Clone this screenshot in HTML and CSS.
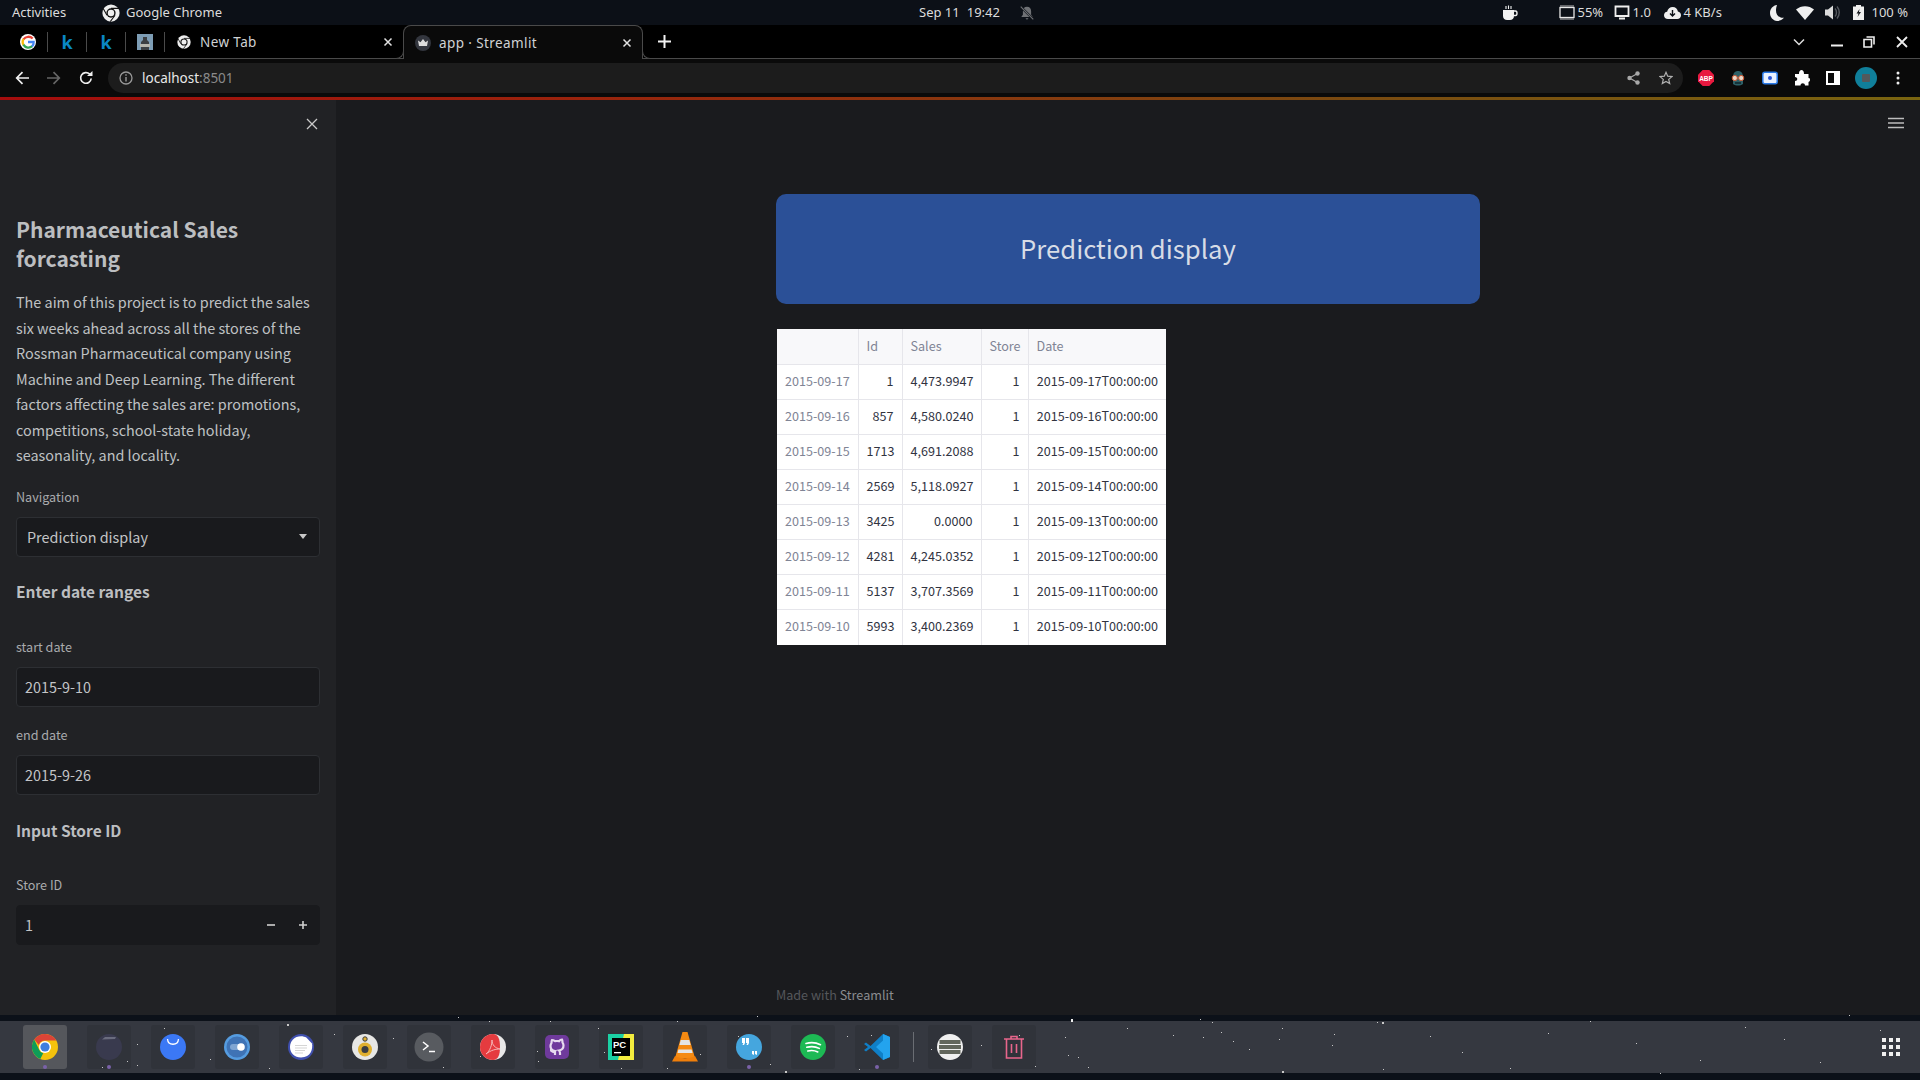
FILE: index.html
```html
<!DOCTYPE html>
<html lang="en">
<head>
<meta charset="utf-8">
<title>app · Streamlit</title>
<link rel="stylesheet" href="styles.css">
</head>
<body>
<svg class="defs" width="0" height="0" aria-hidden="true">
  <symbol id="chrome-mono" viewBox="0 0 24 24">
    <circle cx="12" cy="12" r="11.5" fill="#eee"/>
    <circle cx="12" cy="12" r="6.2" fill="#111"/>
    <circle cx="12" cy="12" r="4.3" fill="#eee"/>
    <path d="M12 5.8H23M6.6 15 1.6 6M17.4 15 11 23.5" stroke="#111" stroke-width="1.4" fill="none"/>
  </symbol>
</svg>

<header class="statusbar">
  <div class="status-left">
    <span class="st-activities">Activities</span>
    <svg class="st-chrome" width="18" height="18"><use href="#chrome-mono"/></svg>
    <span>Google Chrome</span>
  </div>
  <div class="status-center">
    <span>Sep 11</span><span class="st-time">19:42</span>
    <svg class="st-bell" width="16" height="16" viewBox="0 0 14 14"><path d="M7 1.5c-2.4 0-3.6 1.800-3.600 4v3L2 10.500h10l-1.400-2v-3c0-2.200-1.200-4-3.600-4ZM5.600 11.500h2.800L7 13Z" fill="#6f7175"/><path d="M1.500 1.500 12.500 12.500" stroke="#0c1017" stroke-width="2"/><path d="M1.500 1.500 12.500 12.500" stroke="#6f7175" stroke-width="1"/></svg>
  </div>
  <div class="status-right">
    <svg class="st-coffee" width="16" height="16" viewBox="0 0 16 16"><path d="M1 5h11v6c0 2.500-1.800 4-4 4H5c-2.200 0-4-1.500-4-4Z" fill="#f2f2f2"/><path d="M12 6h1.500c2 0 2 4.500 0 4.500H12" fill="none" stroke="#f2f2f2" stroke-width="1.400"/><path d="M4 1v3M6.500 .5v3.500M9 1v3" stroke="#f2f2f2" stroke-width="1.100"/></svg>
    <svg class="st-chip" width="16" height="15" viewBox="0 0 16 15"><rect x="1" y="2.500" width="14" height="10" fill="none" stroke="#e8e8e8" stroke-width="1.300"/><path d="M2 0v2M4 0v2M6 0v2M8 0v2M10 0v2M12 0v2M14 0v2M2 13v2M4 13v2M6 13v2M8 13v2M10 13v2M12 13v2M14 13v2" stroke="#e8e8e8" stroke-width=".8"/></svg>
    <span class="st-cpu">55%</span>
    <svg class="st-mon" width="16" height="15" viewBox="0 0 16 15"><path d="M1.500 1.500h13v9.500h-13Z" fill="none" stroke="#efefef" stroke-width="1.800"/><path d="M5 13.500h6" stroke="#efefef" stroke-width="2"/></svg>
    <span class="st-load">1.0</span>
    <svg class="st-cloud" width="17" height="12" viewBox="0 0 17 12"><path d="M4 12C1.500 12 0 10.500 0 8.300 0 6.400 1.300 5 3.100 4.800 3.800 2 6 0 8.700 0c2.700 0 4.900 1.800 5.200 4.500 1.800.3 3.100 1.800 3.100 3.700 0 2.200-1.600 3.800-3.700 3.800Z" fill="#efefef"/><path d="M8.500 3v5.500M6 6.500l2.500 2.500L11 6.500" fill="none" stroke="#0c1017" stroke-width="1.400"/></svg>
    <span class="st-net">4 KB/s</span>
    <svg class="st-moon" width="14" height="16" viewBox="0 0 14 16"><path d="M7 0C3 .5 0 3.800 0 8s3 7.500 7 8c2.500 0 5-1 7-3.200C8 13.500 4 8 7 0Z" fill="#efefef"/></svg>
    <svg class="st-wifi" width="18" height="14" viewBox="0 0 18 14"><path d="M0 3.500C5-1 13-1 18 3.500L9 14Z" fill="#efefef"/></svg>
    <svg class="st-vol" width="16" height="15" viewBox="0 0 16 15"><path d="M0 4.500h3L8 .5v14L3 10.500H0Z" fill="#dcdcdc"/><path d="M10 3.500c2 2 2 6 0 8M12 1.500c3 3.500 3 8.500 0 12" fill="none" stroke="#55585e" stroke-width="1.400"/></svg>
    <svg class="st-batt" width="11" height="15" viewBox="0 0 11 15"><path d="M3 0h5v1.500h3V15H0V1.500h3Z" fill="#efefef"/><path d="M6.500 4 3.500 8.500h2L4.500 12l3.500-5H6Z" fill="#15181d"/></svg>
    <span class="st-pct">100 %</span>
  </div>
</header>

<nav class="tabstrip">
  <div class="pin">
    <svg width="16" height="16" viewBox="0 0 24 24"><circle cx="12" cy="12" r="12" fill="#fff"/><path d="M19 6.800A9 9 0 0 0 5.200 8" fill="none" stroke="#ea4335" stroke-width="3.400"/><path d="M5.200 7.500a9 9 0 0 0 0 9" fill="none" stroke="#fbbc05" stroke-width="3.400"/><path d="M5 16a9 9 0 0 0 13.500 2.300" fill="none" stroke="#34a853" stroke-width="3.400"/><path d="M12 12h8.500c.2 2.500-.8 5-2.500 6.500" fill="none" stroke="#4285f4" stroke-width="3.400"/></svg>
  </div>
  <div class="pin pin-k">k</div>
  <div class="pin pin-k">k</div>
  <div class="pin">
    <svg width="16" height="16" viewBox="0 0 16 16"><rect width="16" height="16" fill="#7d9db5"/><path d="M6 3h4v3l2 2v8H4V8l2-2Z" fill="#3c3f42"/><rect x="3" y="10" width="10" height="3" fill="#b5b5ad"/></svg>
  </div>
  <div class="tab">
    <svg class="tab-ic" width="14" height="14"><use href="#chrome-mono"/></svg>
    <span class="tab-title">New Tab</span>
    <svg class="tab-x" width="10" height="10" viewBox="0 0 10 10"><path d="M1.500 1.500l7 7M8.500 1.500l-7 7" stroke="#e2e2e2" stroke-width="1.500"/></svg>
  </div>
  <div class="tab tab-active">
    <svg class="tab-ic" width="16" height="16" viewBox="0 0 16 16"><circle cx="8" cy="8" r="8" fill="#33363e"/><path d="M3 5.500l2.500 1.800L8 4l2.500 3.300L13 5.500l-1 5.500H4Z" fill="#ddd"/></svg>
    <span class="tab-title">app · Streamlit</span>
    <svg class="tab-x" width="10" height="10" viewBox="0 0 10 10"><path d="M1.500 1.500l7 7M8.500 1.500l-7 7" stroke="#e2e2e2" stroke-width="1.500"/></svg>
  </div>
  <svg class="tab-plus" width="13" height="13" viewBox="0 0 13 13"><path d="M6.500 0v13M0 6.500h13" stroke="#f2f2f2" stroke-width="2"/></svg>
  <svg class="win-chev" width="12" height="8" viewBox="0 0 12 8"><path d="M1 1.500l5 5 5-5" fill="none" stroke="#ddd" stroke-width="1.500"/></svg>
  <svg class="win-min" width="12" height="10" viewBox="0 0 12 10"><path d="M0 8.500h12" stroke="#eee" stroke-width="2"/></svg>
  <svg class="win-max" width="12" height="12" viewBox="0 0 12 12"><path d="M3.500 1h7.500v7.500M1 3.500h7.500v7.500H1Z" fill="none" stroke="#eee" stroke-width="1.600"/></svg>
  <svg class="win-close" width="12" height="12" viewBox="0 0 12 12"><path d="M1 1l10 10M11 1 1 11" stroke="#eee" stroke-width="1.800"/></svg>
</nav>

<div class="toolbar">
  <svg class="tb-back" width="14" height="14" viewBox="0 0 14 14"><path d="M14 7H2M7.500 1.200 1.700 7l5.800 5.800" fill="none" stroke="#f0f0f0" stroke-width="1.700"/></svg>
  <svg class="tb-fwd" width="14" height="14" viewBox="0 0 14 14"><path d="M0 7h12M6.500 1.200 12.300 7l-5.800 5.800" fill="none" stroke="#666" stroke-width="1.700"/></svg>
  <svg class="tb-reload" width="14" height="14" viewBox="0 0 14 14"><path d="M12.200 7.500A5.300 5.300 0 1 1 10.700 3.200" fill="none" stroke="#f0f0f0" stroke-width="1.700"/><path d="M8 5h5.500V0Z" fill="#f0f0f0"/></svg>
  <div class="omnibox">
    <svg class="omni-info" width="14" height="14" viewBox="0 0 14 14"><circle cx="7" cy="7" r="6" fill="none" stroke="#9a9a9a" stroke-width="1.300"/><path d="M7 6v4.500M7 3.300v1.500" stroke="#9a9a9a" stroke-width="1.400"/></svg>
    <span class="omni-host">localhost</span><span class="omni-port">:8501</span>
    <svg class="omni-share" width="13" height="14" viewBox="0 0 13 14"><path d="M10.500 2.500 2.500 7l8 4.500" fill="none" stroke="#a8a8a8" stroke-width="1.200"/><circle cx="10.500" cy="2.500" r="2.200" fill="#a8a8a8"/><circle cx="2.500" cy="7" r="2.200" fill="#a8a8a8"/><circle cx="10.500" cy="11.500" r="2.200" fill="#a8a8a8"/></svg>
    <svg width="14" height="14" viewBox="0 0 14 14"><path d="M7 1.300 8.700 5.200l4.300.4-3.300 2.800 1 4.200L7 10.400 3.300 12.600l1-4.200L1 5.600l4.300-.4Z" fill="none" stroke="#b0b0b0" stroke-width="1.200"/></svg>
  </div>
  <svg class="ext ext-first" width="16" height="16" viewBox="0 0 16 16"><path d="M4.700 0h6.600L16 4.700v6.600L11.300 16H4.700L0 11.300V4.700Z" fill="#e8193f"/><text class="abp" x="8" y="10.500" text-anchor="middle">ABP</text></svg>
  <svg class="ext" width="16" height="16" viewBox="0 0 16 16"><path d="M3 7C3 3 5 1 8 1s5 2 5 6v7c-3 2-7 2-10 0Z" fill="#2d5f66"/><circle cx="4.800" cy="8" r="2.600" fill="#e9d7c8" stroke="#d0562f"/><circle cx="11.200" cy="8" r="2.600" fill="#e9d7c8" stroke="#d0562f"/><rect x="5" y="12" width="6" height="2" fill="#16333a"/></svg>
  <svg class="ext" width="16" height="14" viewBox="0 0 16 14"><rect x=".8" y="1.300" width="14.400" height="11.400" rx="2" fill="#e9f1ff" stroke="#2878e6" stroke-width="1.500"/><circle cx="8" cy="7" r="2" fill="#2b56d8"/></svg>
  <svg class="ext" width="16" height="16" viewBox="0 0 16 16"><path d="M1 4h4C5 1 6.200 0 7.500 0S10 1 10 4h4.500v4c3 0 1.500 4 0 4v3.500H11c0-3-4.500-3-4.500 0H1V11c3 0 3-4 0-4Z" fill="#fff"/></svg>
  <svg class="ext" width="14" height="14" viewBox="0 0 14 14"><rect width="14" height="14" fill="#fff"/><rect x="2" y="2" width="6" height="10" fill="#0a0a0a"/></svg>
  <svg class="ext ext-avatar" width="22" height="22" viewBox="0 0 22 22"><circle cx="11" cy="11" r="11" fill="#107f9a"/><rect x="7" y="7" width="8" height="8" rx="1" fill="#53595c"/></svg>
  <svg class="ext ext-dots" width="4" height="14" viewBox="0 0 4 14"><circle cx="2" cy="2" r="1.500" fill="#eee"/><circle cx="2" cy="7" r="1.500" fill="#eee"/><circle cx="2" cy="12" r="1.500" fill="#eee"/></svg>
</div>
<div class="loadline"></div>

<div class="app">
  <aside class="sidebar">
    <svg class="side-close" width="12" height="12" viewBox="0 0 12 12"><path d="M1 1l10 10M11 1 1 11" stroke="#c9c9c9" stroke-width="1.300"/></svg>
    <h2 class="side-title">Pharmaceutical Sales forcasting</h2>
    <p class="side-text">The aim of this project is to predict the sales six weeks ahead across all the stores of the Rossman Pharmaceutical company using Machine and Deep Learning. The different factors affecting the sales are: promotions, competitions, school-state holiday, seasonality, and locality.</p>
    <label class="field-label label-nav">Navigation</label>
    <div class="field field-select">
      <span>Prediction display</span>
      <span class="caret"></span>
    </div>
    <h3 class="side-h3 h3-date">Enter date ranges</h3>
    <label class="field-label label-start">start date</label>
    <div class="field">2015-9-10</div>
    <label class="field-label label-end">end date</label>
    <div class="field">2015-9-26</div>
    <h3 class="side-h3 h3-store">Input Store ID</h3>
    <label class="field-label label-store">Store ID</label>
    <div class="field field-num">
      <span>1</span>
      <svg class="num-minus" width="10" height="10" viewBox="0 0 10 10"><path d="M1 5h8" stroke="#d0d0d0" stroke-width="1.600"/></svg>
      <svg class="num-plus" width="10" height="10" viewBox="0 0 10 10"><path d="M1 5h8M5 1v8" stroke="#d0d0d0" stroke-width="1.600"/></svg>
    </div>
  </aside>

  <main class="main">
    <svg class="hamburger" width="16" height="12" viewBox="0 0 16 12"><path d="M0 1.500h16M0 6h16M0 10.500h16" stroke="#bdbdbd" stroke-width="1.500"/></svg>
    <div class="content">
      <div class="banner">Prediction display</div>
      <table class="frame">
        <colgroup><col class="c0"><col class="c1"><col class="c2"><col class="c3"><col class="c4"></colgroup>
        <thead>
          <tr><th></th><th>Id</th><th>Sales</th><th>Store</th><th>Date</th></tr>
        </thead>
        <tbody>
          <tr><th>2015-09-17</th><td>1</td><td>4,473.9947</td><td>1</td><td>2015-09-17T00:00:00</td></tr>
          <tr><th>2015-09-16</th><td>857</td><td>4,580.0240</td><td>1</td><td>2015-09-16T00:00:00</td></tr>
          <tr><th>2015-09-15</th><td>1713</td><td>4,691.2088</td><td>1</td><td>2015-09-15T00:00:00</td></tr>
          <tr><th>2015-09-14</th><td>2569</td><td>5,118.0927</td><td>1</td><td>2015-09-14T00:00:00</td></tr>
          <tr><th>2015-09-13</th><td>3425</td><td>0.0000</td><td>1</td><td>2015-09-13T00:00:00</td></tr>
          <tr><th>2015-09-12</th><td>4281</td><td>4,245.0352</td><td>1</td><td>2015-09-12T00:00:00</td></tr>
          <tr><th>2015-09-11</th><td>5137</td><td>3,707.3569</td><td>1</td><td>2015-09-11T00:00:00</td></tr>
          <tr><th>2015-09-10</th><td>5993</td><td>3,400.2369</td><td>1</td><td>2015-09-10T00:00:00</td></tr>
        </tbody>
      </table>
      <footer class="madewith">Made with <span class="madewith-name">Streamlit</span></footer>
    </div>
  </main>
</div>

<div class="desk">
  <svg class="stars" width="1920" height="65" viewBox="0 1015 1920 65" aria-hidden="true">
    <g fill="#c8c8c8">
      <rect x="164" y="1028" width="1" height="1"/><rect x="287" y="1024" width="2" height="2"/><rect x="334" y="1034" width="1" height="1"/><rect x="393" y="1038" width="1" height="1"/><rect x="443" y="1067" width="1" height="1"/><rect x="269" y="1068" width="1" height="1"/><rect x="137" y="1044" width="1" height="1"/><rect x="127" y="1061" width="1" height="1"/><rect x="137" y="1065" width="1" height="1"/><rect x="102" y="1067" width="1" height="1"/><rect x="210" y="1059" width="1" height="1"/><rect x="480" y="1056" width="1" height="1"/><rect x="458" y="1017" width="1" height="1"/><rect x="489" y="1021" width="1" height="1"/>
      <rect x="550" y="1021" width="1" height="1"/><rect x="598" y="1028" width="1" height="1"/><rect x="537" y="1051" width="1" height="1"/><rect x="538" y="1061" width="1" height="1"/><rect x="604" y="1052" width="1" height="1"/><rect x="621" y="1068" width="1" height="1"/><rect x="667" y="1068" width="1" height="1"/><rect x="700" y="1054" width="1" height="1"/><rect x="785" y="1071" width="2" height="2"/><rect x="757" y="1016" width="1" height="1"/><rect x="770" y="1064" width="1" height="1"/><rect x="738" y="1036" width="1" height="1"/><rect x="847" y="1036" width="1" height="1"/><rect x="871" y="1035" width="1" height="1"/><rect x="859" y="1069" width="1" height="1"/><rect x="931" y="1049" width="1" height="1"/><rect x="981" y="1045" width="1" height="1"/><rect x="1019" y="1035" width="1" height="1"/><rect x="677" y="1021" width="1" height="1"/>
      <rect x="1071" y="1019" width="2" height="3" fill="#eee"/><rect x="1200" y="1019" width="1" height="1"/><rect x="1212" y="1022" width="1" height="1"/><rect x="1221" y="1032" width="1" height="1"/><rect x="1203" y="1037" width="1" height="1"/><rect x="1282" y="1028" width="1" height="1"/><rect x="1279" y="1039" width="1" height="1"/><rect x="1249" y="1049" width="1" height="1"/><rect x="1233" y="1041" width="1" height="1"/><rect x="1334" y="1034" width="1" height="1"/><rect x="1332" y="1045" width="1" height="1"/><rect x="1382" y="1022" width="2" height="2"/><rect x="1377" y="1022" width="1" height="1"/><rect x="1282" y="1071" width="2" height="2"/><rect x="1383" y="1069" width="1" height="1"/><rect x="1088" y="1067" width="1" height="1"/><rect x="1078" y="1057" width="1" height="1"/><rect x="1068" y="1055" width="1" height="1"/><rect x="1065" y="1037" width="1" height="1"/><rect x="1035" y="1066" width="1" height="1"/><rect x="1127" y="1028" width="1" height="1"/><rect x="1173" y="1035" width="1" height="1"/>
      <rect x="1548" y="1033" width="1" height="1"/><rect x="1636" y="1043" width="1" height="1"/><rect x="1784" y="1039" width="1" height="1"/><rect x="1849" y="1015" width="1" height="1"/><rect x="1462" y="1052" width="1" height="1"/><rect x="1510" y="1068" width="1" height="1"/><rect x="1590" y="1021" width="1" height="1"/><rect x="1700" y="1060" width="1" height="1"/><rect x="1745" y="1027" width="1" height="1"/><rect x="1820" y="1062" width="1" height="1"/><rect x="1430" y="1036" width="1" height="1"/><rect x="1660" y="1073" width="1" height="1"/><rect x="1880" y="1030" width="1" height="1"/>
    </g>
  </svg>
  <div class="dock">
    <div class="app-slot slot-active">
      <svg width="26" height="26" viewBox="0 0 26 26"><circle cx="13" cy="13" r="13" fill="#f4c20d"/><path d="M13 0a13 13 0 0 1 11.300 6.500H13A6.500 6.500 0 0 0 6.800 11L2.200 5.600A13 13 0 0 1 13 0Z" fill="#db4437"/><path d="M2.200 5.600 7.400 16.300a6.500 6.500 0 0 0 3.800 3L8.300 25.100A13 13 0 0 1 2.200 5.600Z" fill="#0f9d58"/><circle cx="13" cy="13" r="6" fill="#fff"/><circle cx="13" cy="13" r="4.600" fill="#3f7ee0"/></svg>
      <i class="run-dot"></i>
    </div>
    <div class="app-slot">
      <svg width="26" height="26" viewBox="0 0 26 26"><circle cx="13" cy="13" r="13" fill="#393a4e"/><path d="M6 5.500 9 3h11l-1 2Z" fill="#6a6c7e"/></svg>
      <i class="run-dot"></i>
    </div>
    <div class="app-slot">
      <svg width="26" height="26" viewBox="0 0 26 26"><circle cx="13" cy="13" r="13" fill="#3b78f5"/><path d="M7.500 5c.5 7 10.500 7 11 0" fill="none" stroke="#fff" stroke-width="1.300"/></svg>
    </div>
    <div class="app-slot">
      <svg width="26" height="26" viewBox="0 0 26 26"><circle cx="13" cy="13" r="13" fill="#559ce0"/><circle cx="13" cy="13" r="10.500" fill="#3f73b5"/><rect x="6" y="10" width="14" height="6" rx="3" fill="#7fa5d2"/><circle cx="17" cy="13" r="3.800" fill="#fff"/></svg>
    </div>
    <div class="app-slot">
      <svg width="26" height="26" viewBox="0 0 26 26"><circle cx="13" cy="13" r="13" fill="#3f4fae"/><path d="M13 2.200c2 0 4 .6 5.300 1.300L24 9.500c1 5-1 14-11 14C6.500 23.500 2 19 2 13S6.500 2.200 13 2.200Z" fill="#fff"/><path d="M7 11.500h12M7 14h12M7 16.500h10M7 19h8" stroke="#d5d5d5" stroke-width="1"/></svg>
    </div>
    <div class="app-slot">
      <svg width="26" height="26" viewBox="0 0 26 26"><circle cx="13" cy="13" r="13" fill="#e7e7e5"/><circle cx="13" cy="15.500" r="7" fill="#e0b030"/><circle cx="13" cy="15.500" r="3.500" fill="#3a3d42"/><circle cx="13" cy="5" r="2.200" fill="#e0b030" stroke="#3a3d42"/></svg>
    </div>
    <div class="app-slot">
      <svg width="30" height="30" viewBox="0 0 30 30"><circle cx="15" cy="15" r="14.500" fill="#585b60"/><path d="M9 10l5 4-5 4" fill="none" stroke="#fff" stroke-width="1.500"/><path d="M15 19.500h6" stroke="#fff" stroke-width="1.500"/></svg>
    </div>
    <div class="app-slot">
      <svg width="26" height="26" viewBox="0 0 26 26"><circle cx="13" cy="13" r="13" fill="#e8e8e8"/><path d="M13 0A13 13 0 0 0 13 26c5 0 7-5 7-13S18 0 13 0Z" fill="#e53b3f"/><path d="M6 20c4-3 6-9 6-14 0 5 3 8 8 9-4 0-9 1-14 5Z" fill="none" stroke="#f6b6b6" stroke-width="1"/></svg>
    </div>
    <div class="app-slot">
      <svg width="24" height="24" viewBox="0 0 24 24"><rect width="24" height="24" rx="5" fill="#6f3a9c"/><path d="M8 20v-3c-3 .5-4-2-5-2 1 0 2 1 3 1.500.6.200 1.400.1 2-.5-3-.5-4.500-2-4.500-5 0-1.200.5-2.200 1-3 0-1 0-2 .5-3 1 0 2 .5 3 1.200a10 10 0 0 1 4 0C13 5 14 4.500 15 4.500c.5 1 .5 2 .5 3 .5.800 1 1.800 1 3 0 3-1.500 4.500-4.500 5 .6.500 1 1.500 1 2.500V20" transform="translate(2 0)" fill="none" stroke="#e7dcef" stroke-width="2.200"/></svg>
    </div>
    <div class="app-slot">
      <svg width="26" height="26" viewBox="0 0 26 26"><path d="M0 0h20l6 6v20H0Z" fill="#1bd0a4"/><path d="M16 0h10v26H10Z" fill="#f3ec3e"/><rect x="4" y="4" width="18" height="18" fill="#000"/><text class="pc" x="5" y="13.500">PC</text><rect x="6" y="18" width="7" height="1.300" fill="#fff"/></svg>
    </div>
    <div class="app-slot">
      <svg width="26" height="30" viewBox="0 0 26 30"><path d="M10.500 0h5L23 26H3Z" fill="#f58a12"/><path d="M8.700 8h8.600l1.300 5H7.500ZM6.400 17.500h13.200l1 3.500H5.500Z" fill="#e4e4e4"/><path d="M3 24 0 29.500h26L23 24c-6 3-14 3-20 0Z" fill="#f07f0a"/></svg>
    </div>
    <div class="app-slot">
      <svg width="26" height="26" viewBox="0 0 26 26"><circle cx="13" cy="13" r="13" fill="#45a6de"/><path d="M6 4h3v5l-1 2H6.500l.8-2H6ZM10 4h3v5l-1 2h-1.500l.8-2H10Z" fill="#fff"/><path d="M16 17h2v3l-.5 1h-1l.5-1h-1ZM19 17h2v3l-.5 1h-1l.5-1h-1Z" fill="#fff"/></svg>
      <i class="run-dot"></i>
    </div>
    <div class="app-slot">
      <svg width="26" height="26" viewBox="0 0 26 26"><circle cx="13" cy="13" r="13" fill="#1db954"/><path d="M6 9.500c5-1.500 10-1 14.500 1.200M6.800 13.300c4.500-1.200 8.800-.8 12.500 1.100M7.800 17c3.500-.8 7-.5 10 1" fill="none" stroke="#fff" stroke-width="1.600" stroke-linecap="round"/></svg>
    </div>
    <div class="app-slot">
      <svg width="26" height="26" viewBox="0 0 26 26"><path d="M19 0l7 3v20l-7 3L6.500 14 2 17.500l-2-1.500L4 13 0 10l2-1.500L6.500 12Z" fill="#0f7fc7"/><path d="M19 0l7 3v20l-7 3ZM19 6.500 12 13l7 6.500Z" fill="#23a3ee" fill-rule="evenodd"/></svg>
      <i class="run-dot"></i>
    </div>
    <div class="dock-sep"></div>
    <div class="app-slot">
      <svg width="26" height="26" viewBox="0 0 26 26"><circle cx="13" cy="13" r="13" fill="#f0f0f0"/><rect x="2.500" y="6" width="21" height="4" fill="#62665c"/><rect x="2" y="11" width="22" height="4" fill="#62665c"/><rect x="2.500" y="16" width="21" height="4" fill="#62665c"/></svg>
    </div>
    <div class="app-slot">
      <svg width="22" height="24" viewBox="0 0 22 24"><path d="M1 4h20M8 4V1.500h6V4M3.500 4v19h15V4M8.500 9v9M13.500 9v9" fill="none" stroke="#e8668c" stroke-width="1.600"/></svg>
    </div>
    <svg class="dock-grid" width="18" height="18" viewBox="0 0 18 18"><g fill="#f0f0f0"><rect width="4" height="4"/><rect x="7" width="4" height="4"/><rect x="14" width="4" height="4"/><rect y="7" width="4" height="4"/><rect x="7" y="7" width="4" height="4"/><rect x="14" y="7" width="4" height="4"/><rect y="14" width="4" height="4"/><rect x="7" y="14" width="4" height="4"/><rect x="14" y="14" width="4" height="4"/></g></svg>
  </div>
</div>
</body>
</html>
```

FILE: styles.css
```css
* { box-sizing: border-box; }
html, body { margin: 0; padding: 0; }
body {
  width: 1920px;
  height: 1080px;
  overflow: hidden;
  background: #0c1119;
  display: flex;
  flex-direction: column;
  font-family: "Noto Sans", "Liberation Sans", sans-serif;
}
svg { display: block; flex: none; }
.defs { position: absolute; }

/* GNOME top bar */
.statusbar {
  height: 25px;
  flex: none;
  background: #0c1017;
  color: #dcdcdc;
  font-size: 13px;
  line-height: 23px;
  display: grid;
  grid-template-columns: 919px 1fr auto;
  align-items: center;
}
.status-left, .status-center, .status-right { display: flex; align-items: center; }
.status-left { padding-left: 12px; }
.st-activities { width: 90px; }
.st-chrome { margin-right: 6px; }
.st-time { margin-left: 7px; }
.st-bell { margin-left: 19px; }
.status-right { padding-right: 12px; }
.st-chip { margin-right: 3px; margin-left: 41px; }
.st-cpu { width: 36px; }
.st-mon { margin-right: 3px; }
.st-load { width: 31px; }
.st-cloud { margin-right: 3px; }
.st-net { width: 86px; }
.st-wifi { margin-left: 12px; }
.st-vol { margin-left: 11px; }
.st-batt { margin-left: 12px; }
.st-pct { margin-left: 8px; }

/* Tab strip */
.tabstrip {
  height: 34px;
  flex: none;
  background: #000;
  border-bottom: 1px solid #4a4a4a;
  display: flex;
  align-items: center;
  padding-left: 9px;
  color: #d0d2d4;
  font-size: 13.500px;
}
.pin {
  width: 39px;
  height: 20px;
  display: flex;
  align-items: center;
  justify-content: center;
  border-right: 1px solid #4a4a4a;
}
.pin-k { color: #0a86c4; font: 700 18px "Noto Sans", sans-serif; }
.tab {
  width: 238px;
  height: 33px;
  display: flex;
  align-items: center;
  padding: 0 10px 0 12px;
}
.tab-ic { margin-right: 9px; }
.tab-title { flex: 1; letter-spacing: .4px; }
.tab-active {
  position: relative;
  width: 240px;
  height: 34px;
  margin-bottom: -1px;
  align-self: flex-end;
  background: #0a0a0a;
  border: 1px solid #4a4a4a;
  border-bottom: 0;
  border-radius: 8px 8px 0 0;
  padding: 0 10px 0 11px;
}
.tab-active .tab-ic { margin-right: 8px; }
.tab-active::before, .tab-active::after {
  content: "";
  position: absolute;
  bottom: 0;
  width: 8px;
  height: 8px;
  background: #000;
  border-bottom: 1px solid #4a4a4a;
}
.tab-active::before { left: -9px; border-right: 1px solid #4a4a4a; border-bottom-right-radius: 8px; }
.tab-active::after { right: -9px; border-left: 1px solid #4a4a4a; border-bottom-left-radius: 8px; }
.tab-plus { margin-left: 15px; }
.win-chev { margin-left: 1122px; }
.win-min { margin-left: 26px; }
.win-max { margin-left: 20px; }
.win-close { margin-left: 21px; }

/* Toolbar */
.toolbar {
  height: 38px;
  flex: none;
  background: #0a0a0a;
  display: flex;
  align-items: center;
}
.tb-back { margin-left: 15px; }
.tb-fwd { margin-left: 18px; }
.tb-reload { margin-left: 18px; }
.omnibox {
  width: 1575px;
  height: 30px;
  margin-left: 15px;
  border-radius: 15px;
  background: #1c1c1c;
  display: flex;
  align-items: center;
  padding: 0 10px 0 11px;
  font-size: 13.500px;
}
.omni-info { margin-right: 9px; }
.omni-host { color: #e8e8e8; }
.omni-port { color: #8a8a8a; flex: 1; }
.omni-share { margin-right: 19px; }
.ext { margin-left: 16px; }
.ext-first { margin-left: 15px; }
.ext-avatar { margin-left: 15px; }
.ext-dots { margin-left: 19px; }
.abp { font: 700 6.500px "Liberation Sans", sans-serif; fill: #fff; }
.pc { font: 700 9.500px "Liberation Sans", sans-serif; fill: #fff; }

.loadline {
  height: 3px;
  flex: none;
  background: linear-gradient(90deg, #a50d0d 0%, #9a230c 30%, #7a4a10 70%, #7a6510 100%);
}

/* Streamlit: the CJK family's Latin is Source Sans scaled up by about 1.1,
   so sizes are about 0.9 of the nominal 14/16/18/24/28 px */
.app {
  height: 915px;
  flex: none;
  display: flex;
  font-family: "Noto Sans CJK SC", "Noto Sans", sans-serif;
  background: #1a1b1e;
}
.sidebar {
  position: relative;
  width: 336px;
  flex: none;
  background: #212225;
  padding: 115px 16px 0;
  color: #c8cacc;
}
.side-close { position: absolute; left: 306px; top: 18px; }
.side-title {
  margin: 0 0 16px;
  font-size: 21px;
  line-height: 29px;
  font-weight: 700;
  color: #bcbec0;
}
.side-text {
  margin: 0;
  font-size: 14.400px;
  line-height: 25.500px;
  color: #bfc1c3;
}
.field-label {
  display: block;
  font-size: 12.600px;
  line-height: 20px;
  margin-bottom: 10px;
  color: #a9abad;
}
.label-nav { margin-top: 19px; }
.label-start { margin-top: 34px; }
.label-end { margin-top: 18px; }
.label-store { margin-top: 33px; }
.field {
  height: 40px;
  border: 1px solid #2d2f33;
  border-radius: 4px;
  background: #191a1d;
  color: #c3c5c7;
  font-size: 14.400px;
  line-height: 38px;
  padding: 0 8px;
  display: flex;
  align-items: center;
}
.field-select { justify-content: space-between; padding: 0 12px 0 10px; }
.caret {
  width: 0;
  height: 0;
  border: 4px solid transparent;
  border-top: 5px solid #c8c8c8;
  border-bottom: 0;
}
.field-num { border-color: #191a1d; }
.field-num span { flex: 1; }
.num-minus { margin-right: 22px; }
.num-plus { margin-right: 3px; }
.side-h3 {
  margin: 0;
  font-size: 15.500px;
  line-height: 24px;
  font-weight: 700;
  color: #bcbec0;
}
.h3-date { margin-top: 22px; }
.h3-store { margin-top: 23px; }

.main { position: relative; flex: 1; }
.hamburger { position: absolute; right: 16px; top: 17px; }
.content {
  width: 704px;
  height: 100%;
  margin: 0 auto;
  padding-top: 94px;
  display: flex;
  flex-direction: column;
  align-items: flex-start;
}
.banner {
  width: 100%;
  height: 110px;
  padding-bottom: 3px;
  border-radius: 10px;
  background: #2b5097;
  color: #d7dce6;
  font-size: 25.700px;
  display: flex;
  align-items: center;
  justify-content: center;
}
.frame {
  margin-top: 25px;
  margin-left: 1px;
  border-collapse: collapse;
  table-layout: fixed;
  width: 389px;
  background: #fff;
  font-size: 12.600px;
  line-height: 20px;
  color: #31333f;
}
.c0 { width: 81px; }
.c1 { width: 44px; }
.c2 { width: 79px; }
.c3 { width: 47px; }
.c4 { width: 138px; }
.frame th, .frame td {
  height: 35px;
  padding: 0 8px;
  border: 1px solid #e6e6eb;
  font-weight: 400;
  white-space: nowrap;
}
.frame tr > :first-child { border-left: 0; }
.frame tr > :last-child { border-right: 0; }
.frame thead tr > * { border-top: 0; }
.frame tbody th, .frame tbody td { padding-bottom: 2px; }
.frame tbody tr:last-child > * { border-bottom: 0; height: 36px; }
.frame thead th { background: #f8f8fa; color: #808495; text-align: left; }
.frame tbody th { color: #808495; text-align: right; }
.frame td { text-align: right; }
.madewith {
  margin-top: auto;
  margin-bottom: 10px;
  font-size: 12.600px;
  line-height: 20px;
  color: #55575b;
}
.madewith-name { color: #8b8d90; }

/* Desktop + dock */
.desk {
  position: relative;
  flex: 1;
  padding-top: 6px;
  background: #0c1119;
}
.dock {
  height: 52px;
  background: #353840;
  display: flex;
  align-items: center;
  padding-left: 13px;
}
.stars { position: absolute; left: 0; top: 0; z-index: 1; pointer-events: none; }
.app-slot {
  position: relative;
  width: 64px;
  height: 52px;
  flex: none;
  display: flex;
  align-items: center;
  justify-content: center;
}
.app-slot::before {
  content: "";
  position: absolute;
  left: 10px;
  right: 10px;
  top: 4px;
  bottom: 4px;
  background: #30333a;
  border-radius: 3px;
}
.app-slot svg { position: relative; }
.slot-active::before { background: #55575c; }
.run-dot {
  position: absolute;
  left: 30px;
  top: 44px;
  width: 4px;
  height: 4px;
  border-radius: 50%;
  background: #7a62a8;
}
.dock-sep { width: 1px; height: 30px; background: #6a6d73; margin: 0 4px; }
.dock-grid { margin-left: auto; margin-right: 20px; }
```
